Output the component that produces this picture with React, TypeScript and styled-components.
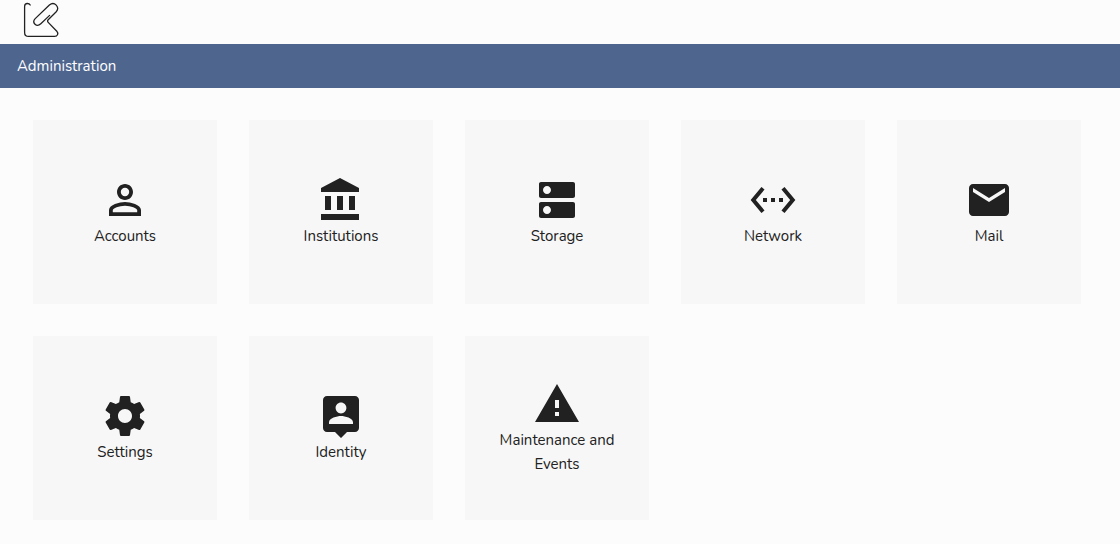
import React from "react";
import styled, { createGlobalStyle } from "styled-components";
import {
  MdDns,
  MdEmail,
  MdPermIdentity,
  MdSettingsEthernet,
  MdWarning,
} from "react-icons/md";

const GlobalStyle = createGlobalStyle`
  * {
    box-sizing: border-box;
  }

  body {
    margin: 0;
    background: #fcfcfc;
    color: #212121;
    font-family: Nunito, "Open Sans", "Noto Sans", sans-serif;
    font-size: 15px;
    line-height: 24px;
  }
`;

const Header = styled.header`
  display: flex;
  align-items: center;
  height: 44px;
  padding: 0 20px;
`;

const LogoLink = styled.a`
  display: flex;
  color: #212121;
`;

const TitleBar = styled.div`
  display: flex;
  align-items: center;
  height: 44px;
  padding: 0 17px;
  background: #4e658e;
  color: #ffffff;
`;

const Title = styled.h1`
  margin: 0;
  font-size: 15px;
  font-weight: 400;
`;

const Tiles = styled.nav`
  display: flex;
  flex-wrap: wrap;
  gap: 32px;
  padding: 32px 33px 24px;
`;

const Tile = styled.button`
  display: flex;
  flex-direction: column;
  align-items: center;
  justify-content: center;
  width: 184px;
  height: 184px;
  padding: 0 24px;
  border: 0;
  background: #f7f7f7;
  color: inherit;
  font: inherit;
  text-align: center;
  cursor: pointer;

  &:hover {
    background: #eeeeee;
  }
`;

type IconProps = { size: number; "aria-hidden"?: "true" };

const glyph = (d: string) =>
  function Glyph({ size, ...rest }: IconProps) {
    return (
      <svg width={size} height={size} viewBox="0 0 24 24" fill="currentColor" {...rest}>
        <path d={d} />
      </svg>
    );
  };

const BankIcon = glyph(
  "M4 10v7h3v-7H4zm6 0v7h3v-7h-3zM2 22h19v-3H2v3zm14-12v7h3v-7h-3zm-4.5-9L2 6v2h19V6l-9.5-5z"
);

const GearIcon = glyph(
  "M19.43 12.98c.04-.32.07-.64.07-.98s-.03-.66-.07-.98l2.11-1.65c.19-.15.24-.42.12-.64l-2-3.46c-.12-.22-.39-.3-.61-.22l-2.49 1c-.52-.4-1.08-.73-1.69-.98l-.38-2.65C14.46 2.18 14.25 2 14 2h-4c-.25 0-.46.18-.49.42l-.38 2.65c-.61.25-1.17.59-1.69.98l-2.49-1c-.23-.09-.49 0-.61.22l-2 3.46c-.13.22-.07.49.12.64l2.11 1.65c-.04.32-.07.65-.07.98s.03.66.07.98l-2.11 1.65c-.19.15-.24.42-.12.64l2 3.46c.12.22.39.3.61.22l2.49-1c.52.4 1.08.73 1.69.98l.38 2.65c.03.24.24.42.49.42h4c.25 0 .46-.18.49-.42l.38-2.65c.61-.25 1.17-.59 1.69-.98l2.49 1c.23.09.49 0 .61-.22l2-3.46c.12-.22.07-.49-.12-.64l-2.11-1.65zM12 15.5c-1.93 0-3.5-1.57-3.5-3.5s1.57-3.5 3.5-3.5 3.5 1.57 3.5 3.5-1.57 3.5-3.5 3.5z"
);

const BadgePinIcon = glyph(
  "M19 2H5c-1.11 0-2 .9-2 2v14c0 1.1.89 2 2 2h4l3 3 3-3h4c1.1 0 2-.9 2-2V4c0-1.1-.9-2-2-2zm-7 3.3c1.49 0 2.7 1.21 2.7 2.7 0 1.49-1.21 2.7-2.7 2.7-1.49 0-2.7-1.21-2.7-2.7 0-1.49 1.21-2.7 2.7-2.7zM18 16H6v-.9c0-2 4-3.1 6-3.1s6 1.1 6 3.1v.9z"
);

const sections: { label: string; icon: React.ComponentType<IconProps> }[] = [
  { label: "Accounts", icon: MdPermIdentity },
  { label: "Institutions", icon: BankIcon },
  { label: "Storage", icon: MdDns },
  { label: "Network", icon: MdSettingsEthernet },
  { label: "Mail", icon: MdEmail },
  { label: "Settings", icon: GearIcon },
  { label: "Identity", icon: BadgePinIcon },
  { label: "Maintenance and Events", icon: MdWarning },
];

function Logo() {
  return (
    <svg
      width="42"
      height="44"
      viewBox="0 0 42 44"
      fill="none"
      stroke="currentColor"
      strokeWidth="1.3"
      strokeLinecap="round"
      strokeLinejoin="round"
      aria-hidden="true"
    >
      <path d="M10.2 5C9.6 3.9 8.6 3.5 7.4 3.5C5.6 3.5 4.6 4.6 4.6 6.4V32.4C4.6 34.8 6.2 36.4 8.6 36.4H34.6C37.6 36.4 38.8 33.4 36.8 31.2L28.2 22.4C27.4 21.6 27.4 20.6 28.2 19.8L36 12C40.4 7.2 34.4 0.8 29.4 5L15.2 18.6C11.4 22.6 16.6 27.8 20.8 23.8L29.6 15.4" />
    </svg>
  );
}

export default function App() {
  return (
    <>
      <GlobalStyle />
      <Header>
        <LogoLink href="#" aria-label="Home">
          <Logo />
        </LogoLink>
      </Header>
      <main>
        <TitleBar>
          <Title>Administration</Title>
        </TitleBar>
        <Tiles aria-label="Administration">
          {sections.map(({ label, icon: Icon }) => (
            <Tile key={label} type="button">
              <Icon size={48} aria-hidden="true" />
              <span>{label}</span>
            </Tile>
          ))}
        </Tiles>
      </main>
    </>
  );
}
